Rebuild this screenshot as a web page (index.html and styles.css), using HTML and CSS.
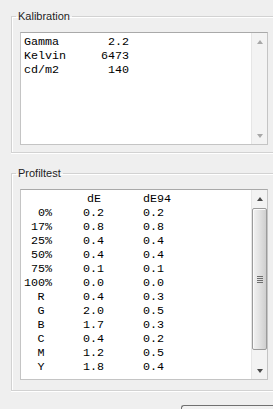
FILE: index.html
```
<!DOCTYPE html>
<html lang="de">
<head>
    <meta charset="UTF-8">
    <meta name="viewport" content="width=device-width, initial-scale=1.0">
    <title>Kalibration</title>
    <link rel="stylesheet" href="styles.css">
</head>
<body>
    <fieldset class="group">
        <legend>Kalibration</legend>
        <div class="listbox listbox-cal">
            <div class="list-rows cal-rows">
                <span>Gamma</span><span class="num">2.2</span>
                <span>Kelvin</span><span class="num">6473</span>
                <span>cd/m2</span><span class="num">140</span>
            </div>
            <div class="scrollbar disabled">
                <div class="arrow up"></div>
                <div class="track"></div>
                <div class="arrow down"></div>
            </div>
        </div>
    </fieldset>

    <fieldset class="group group-test">
        <legend>Profiltest</legend>
        <div class="listbox listbox-test">
            <div class="list-rows test-rows">
                <span></span><span class="head">dE</span><span>dE94</span>
                <span class="lbl">0%</span><span class="c2">0.2</span><span>0.2</span>
                <span class="lbl">17%</span><span class="c2">0.8</span><span>0.8</span>
                <span class="lbl">25%</span><span class="c2">0.4</span><span>0.4</span>
                <span class="lbl">50%</span><span class="c2">0.4</span><span>0.4</span>
                <span class="lbl">75%</span><span class="c2">0.1</span><span>0.1</span>
                <span class="lbl">100%</span><span class="c2">0.0</span><span>0.0</span>
                <span class="lbl mid">R</span><span class="c2">0.4</span><span>0.3</span>
                <span class="lbl mid">G</span><span class="c2">2.0</span><span>0.5</span>
                <span class="lbl mid">B</span><span class="c2">1.7</span><span>0.3</span>
                <span class="lbl mid">C</span><span class="c2">0.4</span><span>0.2</span>
                <span class="lbl mid">M</span><span class="c2">1.2</span><span>0.5</span>
                <span class="lbl mid">Y</span><span class="c2">1.8</span><span>0.4</span>
            </div>
            <div class="scrollbar">
                <div class="arrow up"></div>
                <div class="track">
                    <div class="thumb"><span class="grip"></span></div>
                </div>
                <div class="arrow down"></div>
            </div>
        </div>
    </fieldset>

    <div class="btn-row">
        <button class="btn" type="button"></button>
    </div>
</body>
</html>
```

FILE: styles.css
```
* {
    box-sizing: border-box;
}

html, body {
    height: 100%;
}

body {
    margin: 0;
    padding: 10px 0 0 11px;
    background-color: #efefef;
    font-family: "Liberation Sans", Arial, sans-serif;
    overflow: hidden;
}

/* group boxes (right edge is cut off by the window) */
.group {
    margin: 0;
    padding: 9px 5px 7px 8px;
    border: 1px solid #d2d2d2;
    border-right: none;
    box-shadow: inset 1px 1px 0 #fff, 0 1px 0 #fff;
    min-width: 0;
}

.group legend {
    margin-left: -4px;
    padding: 0 2px;
    font-size: 11px;
    line-height: 13px;
    color: #1e1e1e;
}

.group-test {
    margin-top: 14px;
    padding-bottom: 10px;
}

/* list boxes */
.listbox {
    display: flex;
    background-color: #fff;
    border: 1px solid #c4c4c4;
    border-top-color: #a9a9a9;
}

.listbox-cal {
    height: 113px;
}

.listbox-test {
    height: 191px;
}

.list-rows {
    flex: 1;
    display: grid;
    align-content: start;
    padding: 2px 3px;
    font-family: "Liberation Mono", "Courier New", monospace;
    font-size: 11.7px;
    line-height: 14px;
    color: #000;
    white-space: pre;
}

.cal-rows {
    grid-template-columns: 50px 55px;
}

.cal-rows .num {
    text-align: right;
}

.test-rows {
    grid-template-columns: 28px 91px auto;
}

.test-rows .lbl {
    text-align: right;
}

.test-rows .lbl.mid {
    text-align: center;
    padding-left: 6px;
}

.test-rows .c2 {
    padding-left: 31px;
}

.test-rows .head {
    padding-left: 35px;
}

/* scrollbars */
.scrollbar {
    width: 16px;
    display: flex;
    flex-direction: column;
    background-color: #f3f3f3;
    border-left: 1px solid #e6e6e6;
}

.arrow {
    height: 17px;
    display: flex;
    align-items: center;
    justify-content: center;
}

.arrow::after {
    content: "";
    border-left: 3px solid transparent;
    border-right: 3px solid transparent;
}

.arrow.up::after {
    border-bottom: 4px solid #4a4a4a;
}

.arrow.down::after {
    border-top: 4px solid #4a4a4a;
}

.disabled .arrow.up::after {
    border-bottom-color: #a8a8a8;
}

.disabled .arrow.down::after {
    border-top-color: #a8a8a8;
}

.track {
    flex: 1;
    padding: 1px 0 11px;
}

.thumb {
    height: 142px;
    border: 1px solid #9b9b9b;
    border-radius: 2px;
    background: linear-gradient(to right, #f2f2f2, #e2e2e2 50%, #cfcfcf);
    box-shadow: inset 1px 1px 0 #fbfbfb;
    display: flex;
    align-items: center;
    justify-content: center;
}

.grip {
    width: 6px;
    height: 7px;
    background: repeating-linear-gradient(to bottom, #6e6e6e 0 1px, transparent 1px 2px);
}

/* bottom button, mostly outside the window */
.btn-row {
    display: flex;
    margin-top: 14px;
    padding-left: 170px;
}

.btn {
    flex: 1;
    height: 23px;
    border: 1px solid #707070;
    border-right: none;
    border-radius: 3px 0 0 3px;
    background: linear-gradient(#f2f2f2, #e4e4e4);
}
```
